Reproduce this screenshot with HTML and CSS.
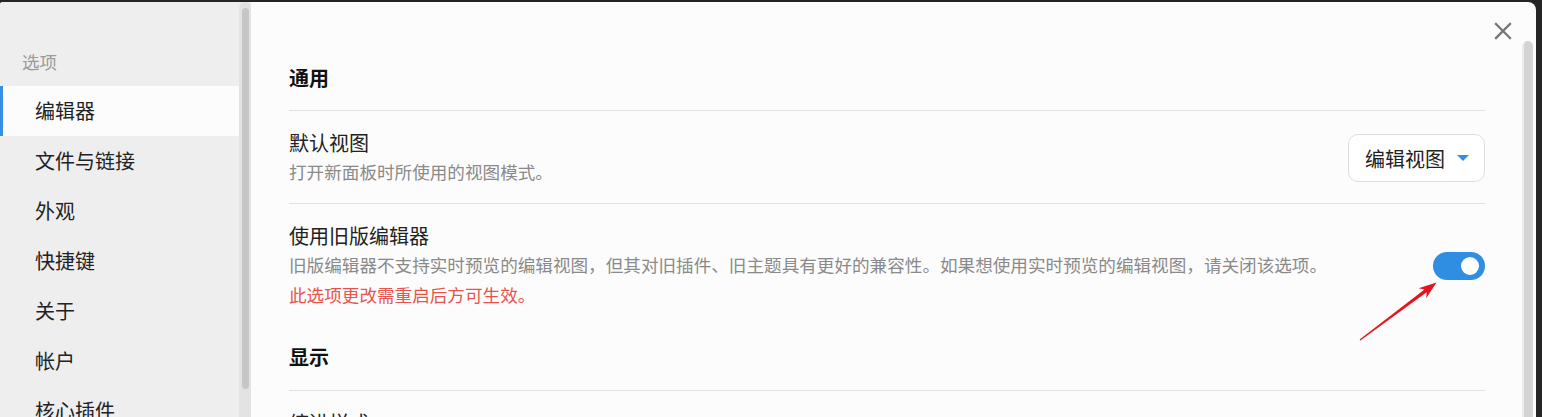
FILE: index.html
```html
<!DOCTYPE html>
<html lang="zh-CN">
<head>
<meta charset="utf-8">
<title>设置</title>
<link rel="stylesheet" href="styles.css">
</head>
<body>
<div class="modal">
  <aside class="sidebar">
    <nav class="nav">
      <div class="nav-label">选项</div>
      <div class="nav-item active">编辑器</div>
      <div class="nav-item">文件与链接</div>
      <div class="nav-item">外观</div>
      <div class="nav-item">快捷键</div>
      <div class="nav-item">关于</div>
      <div class="nav-item">帐户</div>
      <div class="nav-item">核心插件</div>
    </nav>
    <div class="side-track"><div class="side-thumb"></div></div>
  </aside>
  <main class="content">
    <div class="pane">
      <h3 class="heading">通用</h3>
      <div class="item">
        <div class="info">
          <div class="name">默认视图</div>
          <div class="desc">打开新面板时所使用的视图模式。</div>
        </div>
        <div class="dropdown"><span>编辑视图</span><span class="caret"></span></div>
      </div>
      <div class="item item-last">
        <div class="info">
          <div class="name">使用旧版编辑器</div>
          <div class="desc">旧版编辑器不支持实时预览的编辑视图，但其对旧插件、旧主题具有更好的兼容性。如果想使用实时预览的编辑视图，请关闭该选项。</div>
          <div class="desc warn">此选项更改需重启后方可生效。</div>
        </div>
        <div class="toggle"><span class="knob"></span></div>
      </div>
      <h3 class="heading heading-2">显示</h3>
      <div class="item">
        <div class="info">
          <div class="name">缩进样式</div>
        </div>
      </div>
    </div>
    <div class="right-rail">
      <div class="main-thumb"></div>
    </div>
  </main>
  <svg class="close" width="18" height="18" viewBox="0 0 18 18" aria-label="关闭">
    <path d="M2 2 L16 16 M16 2 L2 16" stroke="#777" stroke-width="2.3" stroke-linecap="square" fill="none"/>
  </svg>
  <svg class="arrow" width="100" height="80" viewBox="0 0 100 80">
    <polygon points="10.4,68.5 76.7,20.2 76.2,26.2 86.5,10.6 68.6,16.2 74.5,17.4 9.6,67.5" fill="#e4161d"/>
  </svg>
</div>
</body>
</html>
```

FILE: styles.css
```css
html, body {
  margin: 0;
  padding: 0;
  height: 100%;
  overflow: hidden;
  background: #252525;
}

body {
  font-family: "Noto Sans CJK SC", "Noto Sans", sans-serif;
  color: #222;
}

.modal {
  position: relative;
  display: flex;
  width: 1536px;
  height: 470px;
  margin-top: 2px;
  border-radius: 3px 8px 0 0;
  overflow: hidden;
  background: #fcfcfc;
}

/* sidebar */
.sidebar {
  display: flex;
  width: 251px;
  flex: 0 0 251px;
  background: #eeeeee;
}

.nav {
  flex: 1;
}

.nav-label {
  padding: 48px 0 12px 22px;
  font-size: 17.5px;
  line-height: 24px;
  color: #9a9a9a;
}

.nav-item {
  height: 50px;
  line-height: 50px;
  padding-left: 35px;
  font-size: 20px;
  color: #222;
}

.nav-item.active {
  background: #fcfcfc;
  border-left: 3px solid #3a8ee6;
  padding-left: 32px;
}

.side-track {
  width: 12px;
  padding: 6px 2px 0 3px;
  box-sizing: border-box;
  background: #e3e3e3;
  border-radius: 6px 6px 0 0;
}

.side-thumb {
  width: 7px;
  height: 381px;
  background: #c6c6c6;
  border-radius: 4px;
}

/* content */
.content {
  flex: 1;
  display: flex;
  padding-left: 38px;
}

.pane {
  width: 1196px;
  padding-top: 64px;
}

.heading {
  margin: 0;
  font-size: 20px;
  font-weight: 700;
  line-height: 24px;
  padding-bottom: 20px;
  border-bottom: 1px solid #e1e1e1;
  color: #111;
}

.heading-2 {
  padding-top: 17px;
  padding-bottom: 21px;
}

.item {
  display: flex;
  align-items: center;
  gap: 24px;
  padding: 18px 0 16px;
  border-bottom: 1px solid #e1e1e1;
}

.item-last {
  border-bottom: none;
  padding-bottom: 18px;
}

.info {
  flex: 1;
}

.name {
  font-size: 20px;
  line-height: 28px;
  color: #222;
}

.desc {
  font-size: 17.6px;
  line-height: 30px;
  color: #8a8a8a;
}

.warn {
  color: #e6544c;
}

.dropdown {
  display: flex;
  align-items: center;
  gap: 12px;
  height: 48px;
  box-sizing: border-box;
  padding: 0 15px 0 16px;
  border: 1px solid #dedede;
  border-radius: 10px;
  background: #fff;
  font-size: 20px;
  color: #222;
}

.caret {
  width: 0;
  height: 0;
  border-left: 6px solid transparent;
  border-right: 6px solid transparent;
  border-top: 6px solid #2f8fe6;
}

.toggle {
  display: flex;
  align-items: center;
  justify-content: flex-end;
  width: 52px;
  height: 28px;
  box-sizing: border-box;
  padding-right: 6px;
  border-radius: 14px;
  background: #2f8de2;
}

.knob {
  width: 18px;
  height: 18px;
  border-radius: 50%;
  background: #fff;
}

.right-rail {
  flex: 1;
  display: flex;
  justify-content: flex-end;
  padding-top: 39px;
}

.main-thumb {
  width: 9px;
  height: 500px;
  margin-right: 3px;
  background: #d4d4d4;
  border-left: 2px solid #ececec;
  border-radius: 5px 5px 0 0;
}

.close {
  position: absolute;
  right: 24px;
  top: 20px;
}

.arrow {
  position: absolute;
  left: 1350px;
  top: 270px;
}
```
